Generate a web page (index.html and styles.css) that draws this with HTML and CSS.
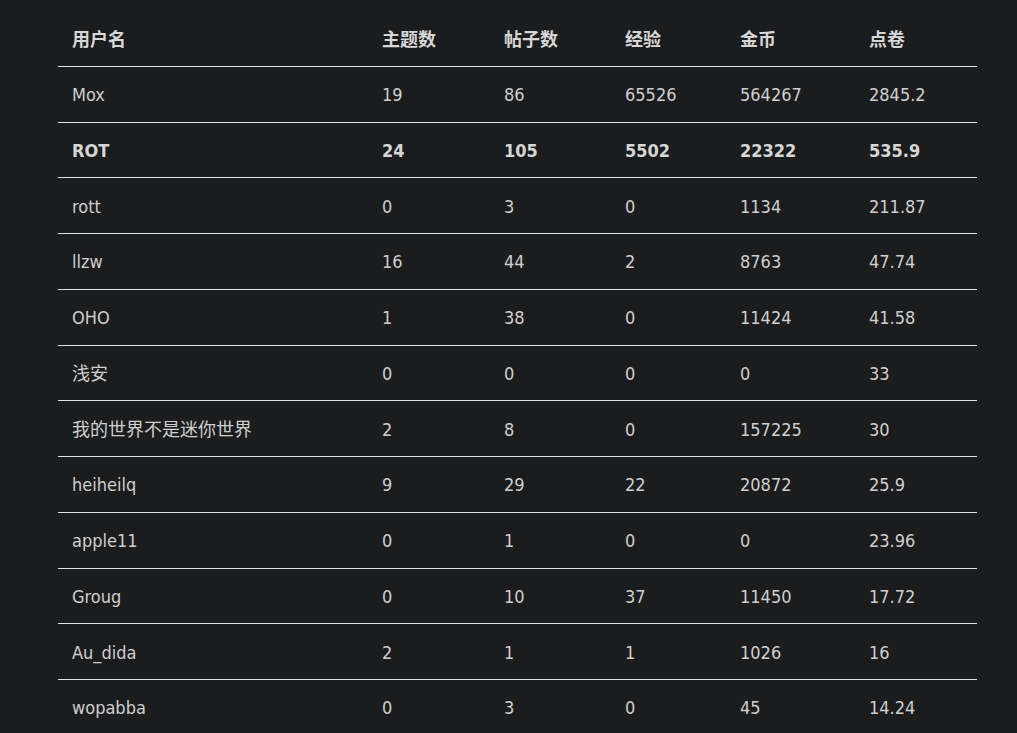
FILE: index.html
```html
<!DOCTYPE html>
<html lang="zh">
<head>
<meta charset="utf-8">
<link rel="stylesheet" href="styles.css">
</head>
<body>
<div class="wrap">
<table class="rank">
<colgroup>
<col class="c1"><col class="c2"><col class="c3"><col class="c4"><col class="c5"><col class="c6">
</colgroup>
<thead>
<tr><th>用户名</th><th>主题数</th><th>帖子数</th><th>经验</th><th>金币</th><th>点卷</th></tr>
</thead>
<tbody>
<tr><td>Mox</td><td>19</td><td>86</td><td>65526</td><td>564267</td><td>2845.2</td></tr>
<tr class="me"><td>ROT</td><td>24</td><td>105</td><td>5502</td><td>22322</td><td>535.9</td></tr>
<tr><td>rott</td><td>0</td><td>3</td><td>0</td><td>1134</td><td>211.87</td></tr>
<tr><td>llzw</td><td>16</td><td>44</td><td>2</td><td>8763</td><td>47.74</td></tr>
<tr><td>OHO</td><td>1</td><td>38</td><td>0</td><td>11424</td><td>41.58</td></tr>
<tr><td>浅安</td><td>0</td><td>0</td><td>0</td><td>0</td><td>33</td></tr>
<tr><td>我的世界不是迷你世界</td><td>2</td><td>8</td><td>0</td><td>157225</td><td>30</td></tr>
<tr><td>heiheilq</td><td>9</td><td>29</td><td>22</td><td>20872</td><td>25.9</td></tr>
<tr><td>apple11</td><td>0</td><td>1</td><td>0</td><td>0</td><td>23.96</td></tr>
<tr><td>Groug</td><td>0</td><td>10</td><td>37</td><td>11450</td><td>17.72</td></tr>
<tr><td>Au_dida</td><td>2</td><td>1</td><td>1</td><td>1026</td><td>16</td></tr>
<tr><td>wopabba</td><td>0</td><td>3</td><td>0</td><td>45</td><td>14.24</td></tr>
</tbody>
</table>
</div>
</body>
</html>
```

FILE: styles.css
```css
html, body {
  margin: 0;
  padding: 0;
  background: #1b1c1e;
}
body {
  font-family: "DejaVu Sans Condensed", "DejaVu Sans", "Noto Sans CJK SC", sans-serif;
  font-size: 18px;
  color: #cfcfcf;
}
.wrap {
  padding: 11px 0 0 58px;
}
.rank {
  width: 919px;
  border-collapse: collapse;
  table-layout: fixed;
}
.c1 { width: 310px; }
.c2 { width: 122px; }
.c3 { width: 121px; }
.c4 { width: 115px; }
.c5 { width: 129px; }
.c6 { width: 122px; }
.rank th,
.rank td {
  text-align: left;
  padding: 2px 14px 0;
  height: 52.75px;
  line-height: 26px;
  vertical-align: middle;
  white-space: nowrap;
}
.rank th {
  font-weight: bold;
  color: #d6d6d6;
  padding-top: 4px;
  height: 50.75px;
  border-bottom: 1px solid #e2e2e2;
}
.rank td {
  border-bottom: 1px solid #e2e2e2;
}
.rank tr.me td {
  font-weight: bold;
  color: #d6d6d6;
}
```
